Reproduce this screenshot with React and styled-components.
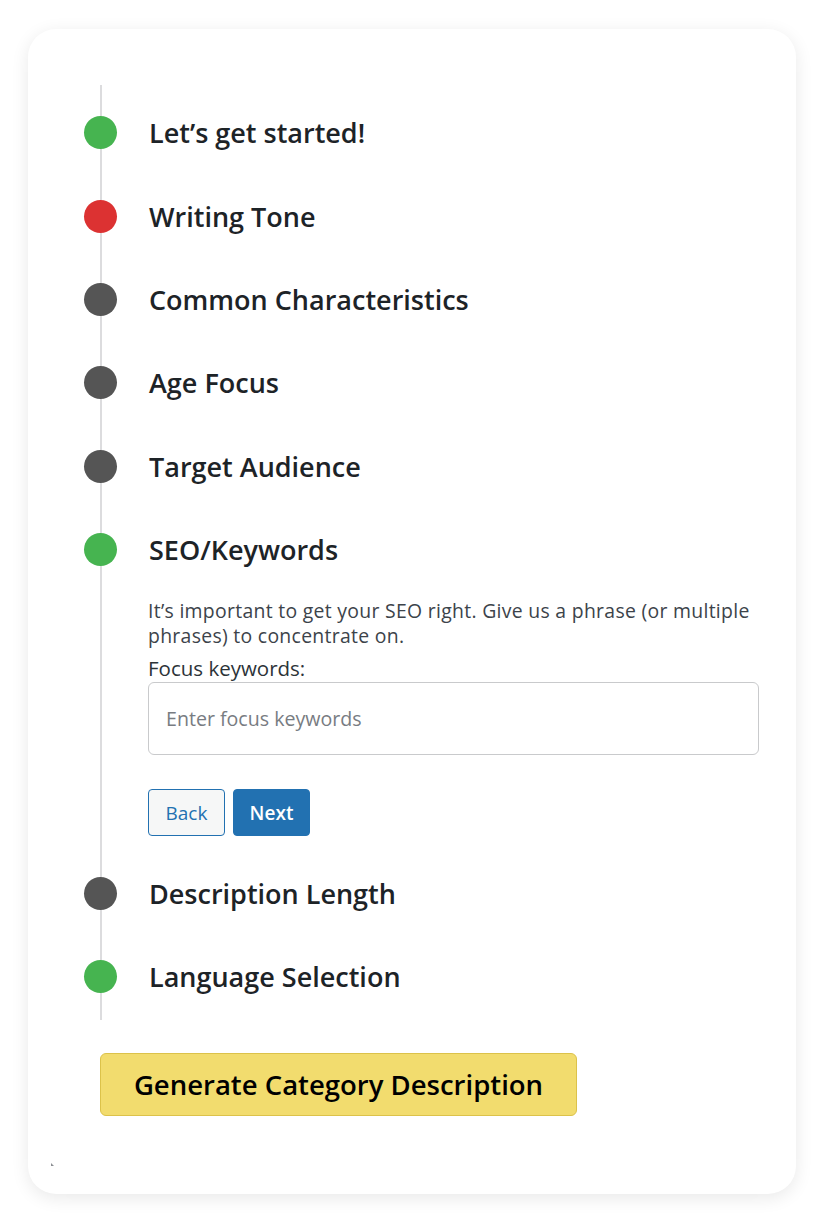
import styled, { createGlobalStyle } from "styled-components";

const GlobalStyle = createGlobalStyle`
  * {
    box-sizing: border-box;
  }
  body {
    margin: 0;
    background: #ffffff;
    font-family: "Open Sans", "Noto Sans", sans-serif;
    color: #1d2327;
  }
`;

const steps = [
  { title: "Let’s get started!", status: "done" },
  { title: "Writing Tone", status: "error" },
  { title: "Common Characteristics", status: "idle" },
  { title: "Age Focus", status: "idle" },
  { title: "Target Audience", status: "idle" },
  { title: "SEO/Keywords", status: "done", open: true },
  { title: "Description Length", status: "idle" },
  { title: "Language Selection", status: "done" },
];

const dotColors = {
  done: "#46b450",
  error: "#dc3232",
  idle: "#555555",
};

const App = () => {
  return (
    <S.Page>
      <GlobalStyle />
      <S.Card>
        <S.Timeline>
          {steps.map((step) => (
            <S.Step key={step.title}>
              <S.Header>
                <S.Dot $status={step.status} />
                <S.Title>{step.title}</S.Title>
              </S.Header>
              {step.open && (
                <S.Body>
                  <S.Hint>
                    It’s important to get your SEO right. Give us a phrase (or
                    multiple phrases) to concentrate on.
                  </S.Hint>
                  <S.Label htmlFor="focus-keywords">Focus keywords:</S.Label>
                  <S.Input
                    id="focus-keywords"
                    type="text"
                    placeholder="Enter focus keywords"
                  />
                  <S.Actions>
                    <S.Button $variant="secondary">Back</S.Button>
                    <S.Button $variant="primary">Next</S.Button>
                  </S.Actions>
                </S.Body>
              )}
            </S.Step>
          ))}
        </S.Timeline>
        <S.Generate>Generate Category Description</S.Generate>
        <S.Corner />
      </S.Card>
    </S.Page>
  );
};

const S = {
  Page: styled.div`
    padding: 29px 22px 29px 28px;
  `,
  Card: styled.div`
    position: relative;
    width: 768px;
    height: 1165px;
    padding: 56px 37px 0 56px;
    background: #ffffff;
    border-radius: 28px;
    box-shadow: 0 4px 18px rgba(0, 0, 0, 0.09);
  `,
  Timeline: styled.div`
    position: relative;
    padding: 6px 0 2px;
    &::before {
      content: "";
      position: absolute;
      left: 16px;
      top: 0;
      bottom: 0;
      width: 2px;
      background: #dcdcde;
    }
  `,
  Step: styled.div`
    position: relative;
  `,
  Header: styled.div`
    display: flex;
    align-items: center;
    gap: 32px;
    height: 83.4px;
  `,
  Dot: styled.span`
    flex: none;
    width: 33px;
    height: 33px;
    border-radius: 50%;
    background: ${(p) => dotColors[p.$status]};
  `,
  Title: styled.h3`
    margin: 0;
    font-size: 27px;
    font-weight: 600;
    color: #1d2327;
  `,
  Body: styled.div`
    display: flex;
    flex-direction: column;
    width: 675px;
    padding: 7px 0 15px 64px;
  `,
  Hint: styled.p`
    margin: 0;
    font-size: 19.4px;
    line-height: 25px;
    letter-spacing: 0.3px;
    color: #3c434a;
  `,
  Label: styled.label`
    margin-top: 6px;
    font-size: 20.5px;
    line-height: 28px;
    color: #2c3338;
  `,
  Input: styled.input`
    width: 611px;
    height: 73px;
    padding: 0 17px;
    border: 1px solid #c9cacc;
    border-radius: 6px;
    font-family: inherit;
    font-size: 19.6px;
    color: #2c3338;
    outline: none;
    &::placeholder {
      color: #787c82;
    }
  `,
  Actions: styled.div`
    display: flex;
    gap: 8px;
    margin-top: 34px;
  `,
  Button: styled.button`
    width: 77px;
    height: 47px;
    padding: 0;
    border-radius: 4px;
    font-family: inherit;
    font-size: 19px;
    cursor: pointer;
    border: 1px solid #2271b1;
    background: ${(p) => (p.$variant === "primary" ? "#2271b1" : "#f6f7f7")};
    color: ${(p) => (p.$variant === "primary" ? "#ffffff" : "#2271b1")};
    font-weight: ${(p) => (p.$variant === "primary" ? 600 : 400)};
  `,
  Generate: styled.button`
    display: block;
    margin: 33px 0 0 16px;
    width: 477px;
    height: 63px;
    border: 1px solid #dcc24a;
    border-radius: 6px;
    background: #f2dc6e;
    font-family: inherit;
    font-size: 27.5px;
    font-weight: 600;
    color: #000000;
    cursor: pointer;
  `,
  Corner: styled.span`
    position: absolute;
    left: 23px;
    bottom: 28px;
    width: 0;
    height: 0;
    border-left: 3px solid #8c8f94;
    border-top: 3px solid transparent;
  `,
};

export default App;
